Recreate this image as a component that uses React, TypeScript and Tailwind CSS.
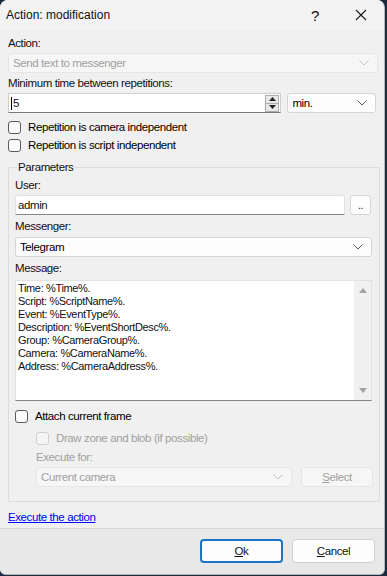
import React from 'react';

const font = { fontFamily: '"Liberation Sans", Arial, sans-serif' };

function Chevron({ color = '#606060' }: { color?: string }) {
	return (
		<svg width="10" height="6" viewBox="0 0 10 6" fill="none">
			<path d="M0.5 0.5 L5 5 L9.5 0.5" stroke={color} strokeWidth="1" />
		</svg>
	);
}

function Combo({ value, disabled, className }: { value: string; disabled?: boolean; className: string }) {
	return (
		<div className={`flex items-center justify-between h-[20px] rounded-[3px] border pl-[4px] pr-[8px] ${disabled ? 'bg-[#f6f6f6] border-[#e6e6e6] text-[#a0a0a0]' : 'bg-[#fdfdfd] border-[#d5d5d5] text-black'} ${className}`}>
			<span>{value}</span>
			<Chevron color={disabled ? '#c4c4c4' : '#606060'} />
		</div>
	);
}

function Check({ label, disabled }: { label: string; disabled?: boolean }) {
	return (
		<div className={`flex items-center gap-[7px] h-[18px] ${disabled ? 'text-[#a0a0a0]' : 'text-black'}`}>
			<div className={`w-[13px] h-[13px] rounded-[3px] border ${disabled ? 'border-[#cfcfcf] bg-[#f5f5f5]' : 'border-[#5b5b5b] bg-[#fbfbfb]'}`} />
			<span>{label}</span>
		</div>
	);
}

export default function App() {
	return (
		<div className="w-[387px] h-[576px] bg-[#1b2a3c] text-[11.5px] leading-[15px] tracking-[-0.4px] text-[#111]" style={font}>
			<div className="w-[385px] h-[575px] bg-[#f0f0f0] rounded-t-[8px] rounded-b-[6px] overflow-hidden flex flex-col border-r border-b border-[#b4b4b4]">
				{/* Title bar */}
				<div className="h-[30px] bg-[#f3f3f3] flex items-center shrink-0">
					<span className="pl-[6px] text-[12px] tracking-normal flex-1">Action: modification</span>
					<span className="w-[46px] text-center text-[15px]">?</span>
					<span className="w-[46px] flex justify-center">
						<svg width="12" height="12" viewBox="0 0 12 12">
							<path d="M1 1 L11 11 M11 1 L1 11" stroke="#1a1a1a" strokeWidth="1.1" />
						</svg>
					</span>
				</div>

				{/* Body */}
				<div className="flex flex-col px-[8px] pt-[6px] flex-1">
					<div className="h-[15px]">Action:</div>
					<Combo value="Send text to messenger" disabled className="mt-[2px] w-[370px]" />

					<div className="h-[15px] mt-[3px]">Minimum time between repetitions:</div>
					<div className="flex mt-[2px] gap-[6px]">
						<div className="w-[275px] h-[20px] bg-white border border-[#d0d0d0] border-b-[#7a7a7a] flex items-center justify-between pl-[2px] pr-[1px]">
							<span className="border-l border-black pl-[1px] leading-[13px]">5</span>
							<div className="flex flex-col w-[14px] h-[17px] border border-[#adadad] bg-[#e8e8e8]">
								<div className="flex-1 flex items-center justify-center border-b border-[#adadad]">
									<svg width="7" height="4" viewBox="0 0 7 4"><path d="M0 4 L3.5 0 L7 4Z" fill="#222" /></svg>
								</div>
								<div className="flex-1 flex items-center justify-center">
									<svg width="7" height="4" viewBox="0 0 7 4"><path d="M0 0 L3.5 4 L7 0Z" fill="#222" /></svg>
								</div>
							</div>
						</div>
						<Combo value="min." className="w-[89px]" />
					</div>

					<div className="mt-[5px] flex flex-col">
						<Check label="Repetition is camera independent" />
						<Check label="Repetition is script independent" />
					</div>

					{/* Parameters group */}
					<fieldset className="mt-[6px] border border-[#dcdcdc] rounded-[2px] px-[6px] pb-[14px] w-[370px]">
						<legend className="ml-[2px] px-[1px]">Parameters</legend>
						<div className="h-[15px] mt-[3px]">User:</div>
						<div className="flex gap-[5px] mt-[2px]">
							<div className="w-[330px] h-[20px] bg-white border border-[#e2e2e2] border-b-[#868686] rounded-t-[2px] flex items-center pl-[2px]">admin</div>
							<div className="w-[21px] h-[20px] bg-[#fdfdfd] border border-[#d5d5d5] rounded-[3px] flex items-end justify-center pb-[3px] text-[10px] leading-[10px]">..</div>
						</div>
						<div className="h-[15px] mt-[4px]">Messenger:</div>
						<Combo value="Telegram" className="mt-[3px] w-[357px]" />
						<div className="h-[15px] mt-[4px]">Message:</div>
						<div className="mt-[4px] w-[357px] h-[121px] bg-white border border-[#e2e2e2] border-b-[#868686] flex">
							<div className="flex-1 pl-[2px] pt-[1px] leading-[13px] text-[11px] tracking-[-0.35px] whitespace-pre">
								{'Time: %Time%.\nScript: %ScriptName%.\nEvent: %EventType%.\nDescription: %EventShortDesc%.\nGroup: %CameraGroup%.\nCamera: %CameraName%.\nAddress: %CameraAddress%.'}
							</div>
							<div className="w-[17px] bg-[#f0f0f0] flex flex-col justify-between items-center py-[7px]">
								<svg width="8" height="5" viewBox="0 0 8 5"><path d="M0 5 L4 0 L8 5Z" fill="#a3a3a3" /></svg>
								<svg width="8" height="5" viewBox="0 0 8 5"><path d="M0 0 L4 5 L8 0Z" fill="#a3a3a3" /></svg>
							</div>
						</div>
						<div className="mt-[6px]">
							<Check label="Attach current frame" />
						</div>
						<div className="pl-[21px] flex flex-col">
							<div className="mt-[4px]">
								<Check label="Draw zone and blob (if possible)" disabled />
							</div>
							<div className="h-[15px] mt-[3px] text-[#a0a0a0]">Execute for:</div>
							<div className="flex gap-[9px] mt-[2px]">
								<Combo value="Current camera" disabled className="w-[256px]" />
								<div className="w-[72px] h-[20px] rounded-[3px] border border-[#e6e6e6] bg-[#f6f6f6] text-[#a0a0a0] flex items-center justify-center">
									<span><u>S</u>elect</span>
								</div>
							</div>
						</div>
					</fieldset>

					<div className="mt-[8px]">
						<span className="text-[#0000ff] underline">Execute the action</span>
					</div>
				</div>

				{/* Footer */}
				<div className="h-[46px] shrink-0 bg-[#e8e8e8] border-t border-[#d6d6d6] flex items-start justify-end gap-[9px] pt-[10px] pr-[9px]">
					<div className="w-[83px] h-[24px] rounded-[4px] border-2 border-[#1a73c8] bg-[#fdfdfd] flex items-center justify-center">
						<span><u>O</u>k</span>
					</div>
					<div className="w-[83px] h-[24px] rounded-[4px] border border-[#d0d0d0] bg-[#fdfdfd] flex items-center justify-center">
						<span><u>C</u>ancel</span>
					</div>
				</div>
			</div>
		</div>
	);
}
